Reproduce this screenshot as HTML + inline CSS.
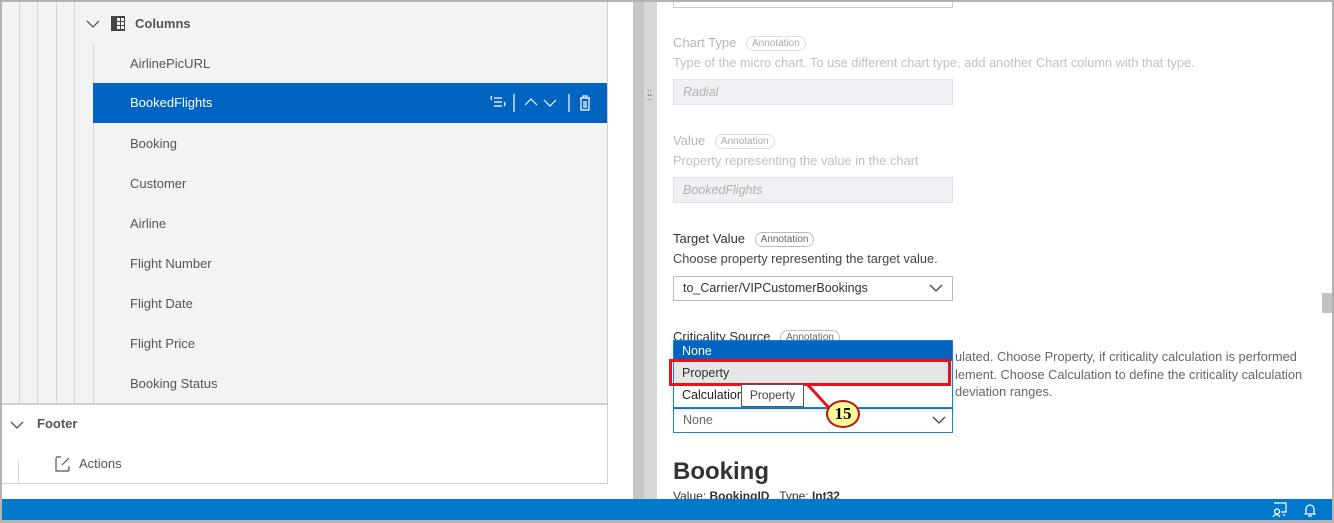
<!DOCTYPE html>
<html><head><style>
*{margin:0;padding:0;box-sizing:border-box}
body{width:1334px;height:523px;overflow:hidden;background:#fff;font-family:"Liberation Sans",sans-serif;position:relative}
.a{position:absolute}
.frame{left:0;top:0;width:1334px;height:523px;border:2px solid #b3b3b3;border-bottom-width:3px}
.tree{left:2px;top:2px;width:606px;height:401px;background:#f3f3f3;border-right:1px solid #d0d0d0}
.vl{width:1px;background:#d6d6d6}
.row{left:93px;width:514px;height:40px;font-size:13px;color:#555;line-height:40px;padding-left:37px}
.lbl{font-size:13px;color:#b5b5b5}
.desc{font-size:12.8px;color:#c0c0c0}
.badge{font-size:10px;border:1px solid #ddd;border-radius:9px;padding:1px 5px;color:#aaa;margin-left:6px;vertical-align:1px}
.inp{width:280px;height:26px;background:#eef0f4;border:1px solid #dde0e4;font-style:italic;color:#b0b0b0;font-size:12.5px;line-height:24px;padding-left:9px}
</style></head><body>
<div class="a tree"></div>
<div class="a vl" style="left:19px;top:2px;height:401px"></div>
<div class="a vl" style="left:37px;top:2px;height:401px"></div>
<div class="a vl" style="left:56px;top:2px;height:401px"></div>
<div class="a vl" style="left:74px;top:2px;height:401px"></div>
<div class="a vl" style="left:93px;top:44px;height:359px"></div>
<svg class="a" style="left:86px;top:19px" width="14" height="10"><path d="M1 2l6 6 6-6" stroke="#555" fill="none" stroke-width="1.3"/></svg>
<svg class="a" style="left:111px;top:16px" width="14" height="15"><rect x="0" y="0" width="14" height="15" fill="#444"/><rect x="6" y="2" width="3" height="3" fill="#f3f3f3"/><rect x="10" y="2" width="3" height="3" fill="#f3f3f3"/><rect x="6" y="6" width="3" height="3" fill="#f3f3f3"/><rect x="10" y="6" width="3" height="3" fill="#f3f3f3"/><rect x="6" y="10" width="3" height="3" fill="#f3f3f3"/><rect x="10" y="10" width="3" height="3" fill="#f3f3f3"/></svg>
<div class="a" style="left:135px;top:16px;font-size:13px;font-weight:bold;color:#555">Columns</div>
<div class="a row" style="top:44px">AirlinePicURL</div>
<div class="a row" style="top:83px;background:#0064c0;color:#fff">BookedFlights</div>
<svg class="a" style="left:488px;top:93px;width:110px;height:20px"><g stroke="#fff" fill="none" stroke-width="1.2"><path d="M4 3q-2 2 0 4M6 5h8M6 9h8M6 13h8M16 9q2 2 0 4"/><path d="M26 1v18"/><path d="M37 12l6-6 6 6M56 7l6 6 6-6"/><path d="M81 1v18"/><path d="M92 5h10M95 5v-2h4v2M93 5v12h8V5M96 8v7M98 8v7"/></g></svg>
<div class="a row" style="top:124px">Booking</div>
<div class="a row" style="top:164px">Customer</div>
<div class="a row" style="top:204px">Airline</div>
<div class="a row" style="top:244px">Flight Number</div>
<div class="a row" style="top:284px">Flight Date</div>
<div class="a row" style="top:324px">Flight Price</div>
<div class="a row" style="top:364px">Booking Status</div>
<div class="a" style="left:2px;top:403px;width:606px;height:81px;border-top:2px solid #d0d0d0;border-right:1px solid #d0d0d0;border-bottom:1px solid #d0d0d0"></div>
<svg class="a" style="left:10px;top:420px" width="14" height="10"><path d="M1 2l6 6 6-6" stroke="#555" fill="none" stroke-width="1.3"/></svg>
<div class="a" style="left:37px;top:416px;font-size:13px;font-weight:bold;color:#555">Footer</div>
<div class="a vl" style="left:18px;top:462px;height:21px"></div>
<svg class="a" style="left:55px;top:456px" width="16" height="16"><path d="M1 2v13h13M1 1h5M14 10v5M7 9l7-7" stroke="#555" fill="none" stroke-width="1.2"/></svg>
<div class="a" style="left:79px;top:456px;font-size:13px;color:#555">Actions</div>
<div class="a" style="left:633px;top:2px;width:11px;height:497px;background:#c6c6c6"></div>
<div class="a" style="left:644px;top:2px;width:13px;height:497px;background:#d7d7d7"></div>
<div class="a" style="left:647px;top:92px;font-size:8px;color:#666;line-height:4px">⁚⁚<br>⁚⁚</div>
<div class="a" style="left:673px;top:2px;width:280px;height:6px;border:1px solid #ccc;border-top:none"></div>
<div class="a lbl" style="left:673px;top:35px">Chart Type <span class="badge">Annotation</span></div>
<div class="a desc" style="left:673px;top:55px">Type of the micro chart. To use different chart type, add another Chart column with that type.</div>
<div class="a inp" style="left:673px;top:79px">Radial</div>
<div class="a lbl" style="left:673px;top:133px">Value <span class="badge">Annotation</span></div>
<div class="a desc" style="left:673px;top:153px">Property representing the value in the chart</div>
<div class="a inp" style="left:673px;top:177px">BookedFlights</div>
<div class="a" style="left:673px;top:231px;font-size:13px;color:#333">Target Value <span class="badge" style="color:#666;border-color:#bbb">Annotation</span></div>
<div class="a" style="left:673px;top:251px;font-size:12.8px;color:#444">Choose property representing the target value.</div>
<div class="a" style="left:673px;top:276px;width:280px;height:25px;border:1px solid #bbb;font-size:12.5px;color:#333;line-height:23px;padding-left:9px">to_Carrier/VIPCustomerBookings</div>
<svg class="a" style="left:929px;top:283px" width="14" height="10"><path d="M1 2l6 6 6-6" stroke="#444" fill="none" stroke-width="1.3"/></svg>
<div class="a" style="left:673px;top:329px;font-size:13px;color:#333">Criticality Source <span class="badge" style="color:#666;border-color:#bbb">Annotation</span></div>
<div class="a" style="left:955px;top:348px;font-size:12.8px;color:#666;line-height:17.5px">ulated. Choose Property, if criticality calculation is performed<br>lement. Choose Calculation to define the criticality calculation<br>deviation ranges.</div>
<div class="a" style="left:673px;top:408px;width:280px;height:25px;border:1px solid #1b7fd6;font-size:12.5px;color:#666;line-height:23px;padding-left:9px">None</div>
<svg class="a" style="left:932px;top:415px" width="14" height="10"><path d="M1 2l6 6 6-6" stroke="#444" fill="none" stroke-width="1.3"/></svg>
<div class="a" style="left:673px;top:340px;width:280px;height:68px;border:1px solid #1b7fd6;background:#fff;box-shadow:0 2px 4px rgba(0,0,0,.15)"></div>
<div class="a" style="left:674px;top:341px;width:278px;height:20px;background:#0064c0;color:#fff;font-size:12.5px;line-height:20px;padding-left:8px">None</div>
<div class="a" style="left:674px;top:362px;width:278px;height:23px;background:#e6e6e6;color:#333;font-size:12.5px;line-height:23px;padding-left:8px">Property</div>
<div class="a" style="left:674px;top:385px;font-size:12.5px;color:#222;line-height:20px;padding-left:8px">Calculation</div>
<div class="a" style="left:669px;top:359px;width:282px;height:27px;border:3px solid #e8141c"></div>
<div class="a" style="left:741px;top:384px;width:63px;height:23px;border:1px solid #555;background:#fff;font-size:12px;color:#444;line-height:21px;text-align:center">Property</div>
<svg class="a" style="left:800px;top:380px" width="40" height="40"><path d="M8 5l22 24" stroke="#e8141c" stroke-width="3"/></svg>
<div class="a" style="left:826px;top:400px;width:34px;height:28px;border-radius:50%;background:#ffff99;border:2px solid #c01010;font-family:'Liberation Serif',serif;font-weight:bold;font-size:17px;text-align:center;line-height:24px">15</div>
<div class="a" style="left:673px;top:458px;font-size:24px;font-weight:bold;color:#333">Booking</div>
<div class="a" style="left:673px;top:489px;font-size:12px;color:#333">Value: <b>BookingID</b>&nbsp;&nbsp; Type: <b>Int32</b></div>
<div class="a" style="left:1322px;top:293px;width:10px;height:20px;background:#c3c3c3"></div>
<div class="a" style="left:0;top:499px;width:1334px;height:22px;background:#0078cc"></div>
<svg class="a" style="left:1272px;top:502px" width="50" height="16"><g stroke="#fff" fill="none" stroke-width="1.2"><path d="M2 1h12v9h-5M5 7a2.5 2.5 0 1 0 .1 0M1 15q3-5 7 0M11 12l2 2"/><path d="M34 12V7a4 4 0 0 1 8 0v5h1.5H32.5M36 14h4"/></g></svg>
<div class="a frame"></div>
</body></html>
